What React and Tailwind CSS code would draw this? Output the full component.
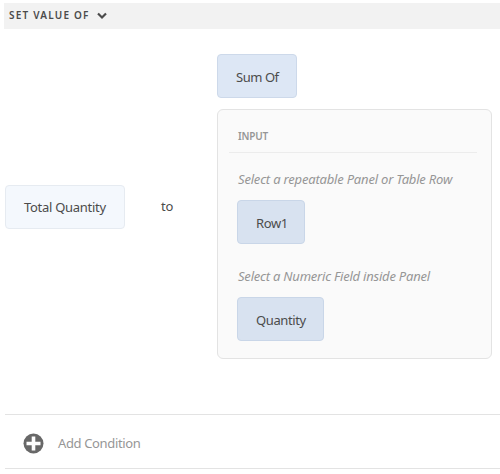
function Chip({ className, children }) {
  return (
    <button
      type="button"
      className={`flex h-11 items-center whitespace-nowrap rounded border pl-[18px] pt-[3px] text-[13px] text-[#4b4b4b] ${className}`}
    >
      {children}
    </button>
  );
}

function Header() {
  return (
    <header className="ml-1 flex h-[26px] items-center bg-[#f2f2f2] pl-[5px] text-[#4b4b4b]">
      <span className="w-[88px] whitespace-nowrap pb-0.5 text-[10px] font-semibold leading-4 tracking-[1.2px]">SET VALUE OF</span>
      <svg width="10" height="8" viewBox="0 0 10 8" fill="none" className="-mt-px">
        <path d="M1 1.5 5 5.5 9 1.5" stroke="currentColor" strokeWidth="2.2" />
      </svg>
    </header>
  );
}

function InputPanel() {
  return (
    <section className="mt-[11px] h-[250px] w-[275px] rounded-md border border-[#e3e3e3] bg-[#fafafa] pl-[19px]">
      <h2 className="-ml-2 flex h-[43px] w-[248px] items-end border-b border-[#ececec] pb-2 pl-[9px] text-[10px] font-semibold leading-4 tracking-[-0.2px] text-[#969696]">
        INPUT
      </h2>
      <p className="mt-4 h-5 whitespace-nowrap pl-px text-[13px] italic leading-5 tracking-[-0.19px] text-[#969696]">
        Select a repeatable Panel or Table Row
      </p>
      <Chip className="mt-[11px] w-[68px] border-[#c9d6e8] bg-[#d8e2f0] tracking-[-0.4px]">Row1</Chip>
      <p className="mt-[22px] h-5 whitespace-nowrap pl-px text-[13px] italic leading-5 tracking-[-0.21px] text-[#969696]">
        Select a Numeric Field inside Panel
      </p>
      <Chip className="mt-[11px] w-[87px] border-[#c9d6e8] bg-[#d8e2f0] tracking-[-0.4px]">Quantity</Chip>
    </section>
  );
}

export default function App() {
  return (
    <main className="h-[474px] w-[500px] overflow-hidden bg-white pt-[3px] font-['Noto_Sans',sans-serif]">
      <Header />
      <div className="mt-[25px] flex h-[305px] items-center pl-[5px]">
        <Chip className="w-[120px] border-[#e6ebf1] bg-[#f4f8fd] tracking-[-0.28px]">Total Quantity</Chip>
        <span className="ml-9 w-14 pb-0.5 text-[13px] leading-5 tracking-[-0.2px] text-[#4b4b4b]">to</span>
        <div>
          <Chip className="w-20 border-[#cdd9ea] bg-[#dde7f5] tracking-[-0.45px]">Sum Of</Chip>
          <InputPanel />
        </div>
      </div>
      <footer className="ml-[5px] mt-[55px] flex h-[55px] items-center border-y border-[#e3e3e3] pl-[18px] pt-[3px]">
        <svg width="21" height="21" viewBox="0 0 21 21">
          <circle cx="10.5" cy="10.5" r="10" fill="#686868" />
          <path d="M10.5 3.5v14M3.5 10.5h14" stroke="white" strokeWidth="3.6" />
        </svg>
        <span className="ml-[14px] pt-0.5 text-[13px] tracking-[-0.36px] text-[#969696]">Add Condition</span>
      </footer>
    </main>
  );
}
